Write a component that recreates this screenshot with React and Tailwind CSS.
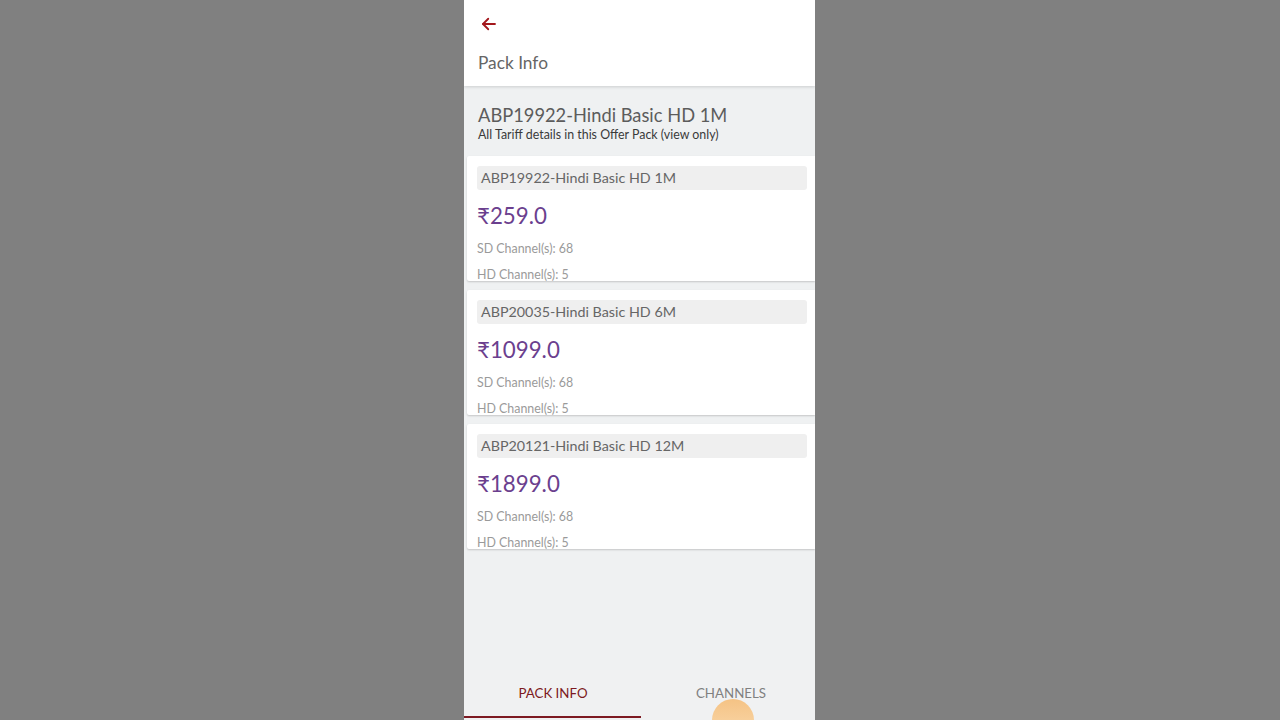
// App.jsx - Pack Info screen (mobile frame on grey backdrop)
import React from 'react';

const PACKS = [
    { code: 'ABP19922-Hindi Basic HD 1M', price: '₹259.0', sd: 68, hd: 5 },
    { code: 'ABP20035-Hindi Basic HD 6M', price: '₹1099.0', sd: 68, hd: 5 },
    { code: 'ABP20121-Hindi Basic HD 12M', price: '₹1899.0', sd: 68, hd: 5 },
];

const BackArrow = () => (
    <svg width="18" height="18" viewBox="0 0 24 24" fill="none" stroke="#a3171c" strokeWidth="2.4" strokeLinecap="round" strokeLinejoin="round">
        <path d="M20 12H4" />
        <path d="M11 5l-7 7 7 7" />
    </svg>
);

const PackCard = ({ pack }) => (
    <div className="ml-[3px] h-[125px] overflow-hidden bg-white rounded-l-[2px] shadow-[0_1px_2px_rgba(0,0,0,0.18)] pl-[10px] pr-[8px] pt-[10px]">
        <div className="h-[24px] bg-[#efefef] rounded-[3px] px-[4px] flex items-center text-[14.3px] text-[#666]">
            {pack.code}
        </div>
        <div className="mt-[12px] text-[22.3px] leading-[28px] text-[#6b3f8e]">{pack.price}</div>
        <div className="mt-[11px] text-[12.4px] leading-[16px] text-[#9a9a9a]">SD Channel(s): {pack.sd}</div>
        <div className="mt-[10px] text-[12.4px] leading-[16px] text-[#9a9a9a]">HD Channel(s): {pack.hd}</div>
    </div>
);

const App = () => {
    return (
        <div className="w-[1280px] h-[720px] bg-[#808080] pl-[464px] overflow-hidden" style={{ fontFamily: 'Lato, "Open Sans", sans-serif' }}>
            <div className="relative w-[351px] h-[720px] bg-[#eff1f2] flex flex-col overflow-hidden">

                {/* Header */}
                <div className="h-[86px] bg-white flex-shrink-0 px-[14px] pt-[15px] shadow-[0_1px_3px_rgba(0,0,0,0.15)] z-10">
                    <div className="h-[18px] flex items-center pl-[2px]"><BackArrow /></div>
                    <div className="mt-[19px] text-[17.3px] leading-[22px] text-[#666]">Pack Info</div>
                </div>

                {/* Pack summary */}
                <div className="px-[14px] pt-[17px] pb-[13px]">
                    <div className="text-[18.3px] leading-[24px] text-[#5c5c5c]">ABP19922-Hindi Basic HD 1M</div>
                    <div className="text-[12.4px] leading-[16px] text-[#3a3a3a]">All Tariff details in this Offer Pack (view only)</div>
                </div>

                {/* Tariff list */}
                <div className="flex flex-col gap-[9px]">
                    {PACKS.map(p => <PackCard key={p.code} pack={p} />)}
                </div>

                <div className="flex-1" />

                {/* Bottom tabs */}
                <div className="h-[50px] bg-[#f0f1f2] grid grid-cols-[177px_1fr] flex-shrink-0">
                    <div className="relative flex items-center justify-center text-[13.3px] text-[#7d1a22] pb-[2px] pl-[1px]">
                        PACK INFO
                        <div className="absolute left-0 right-0 bottom-[2px] h-[2px] bg-[#7d1a22]" />
                    </div>
                    <div className="flex items-center justify-center text-[13.3px] text-[#808080] pb-[2px] pl-[6px]">
                        CHANNELS
                    </div>
                </div>

                {/* touch ripple */}
                <div className="absolute left-[248px] top-[699px] w-[42px] h-[42px] rounded-full bg-gradient-to-b from-[#f5bd78] to-[#fbd9a8] opacity-90" />
            </div>
        </div>
    );
};

export default App;
